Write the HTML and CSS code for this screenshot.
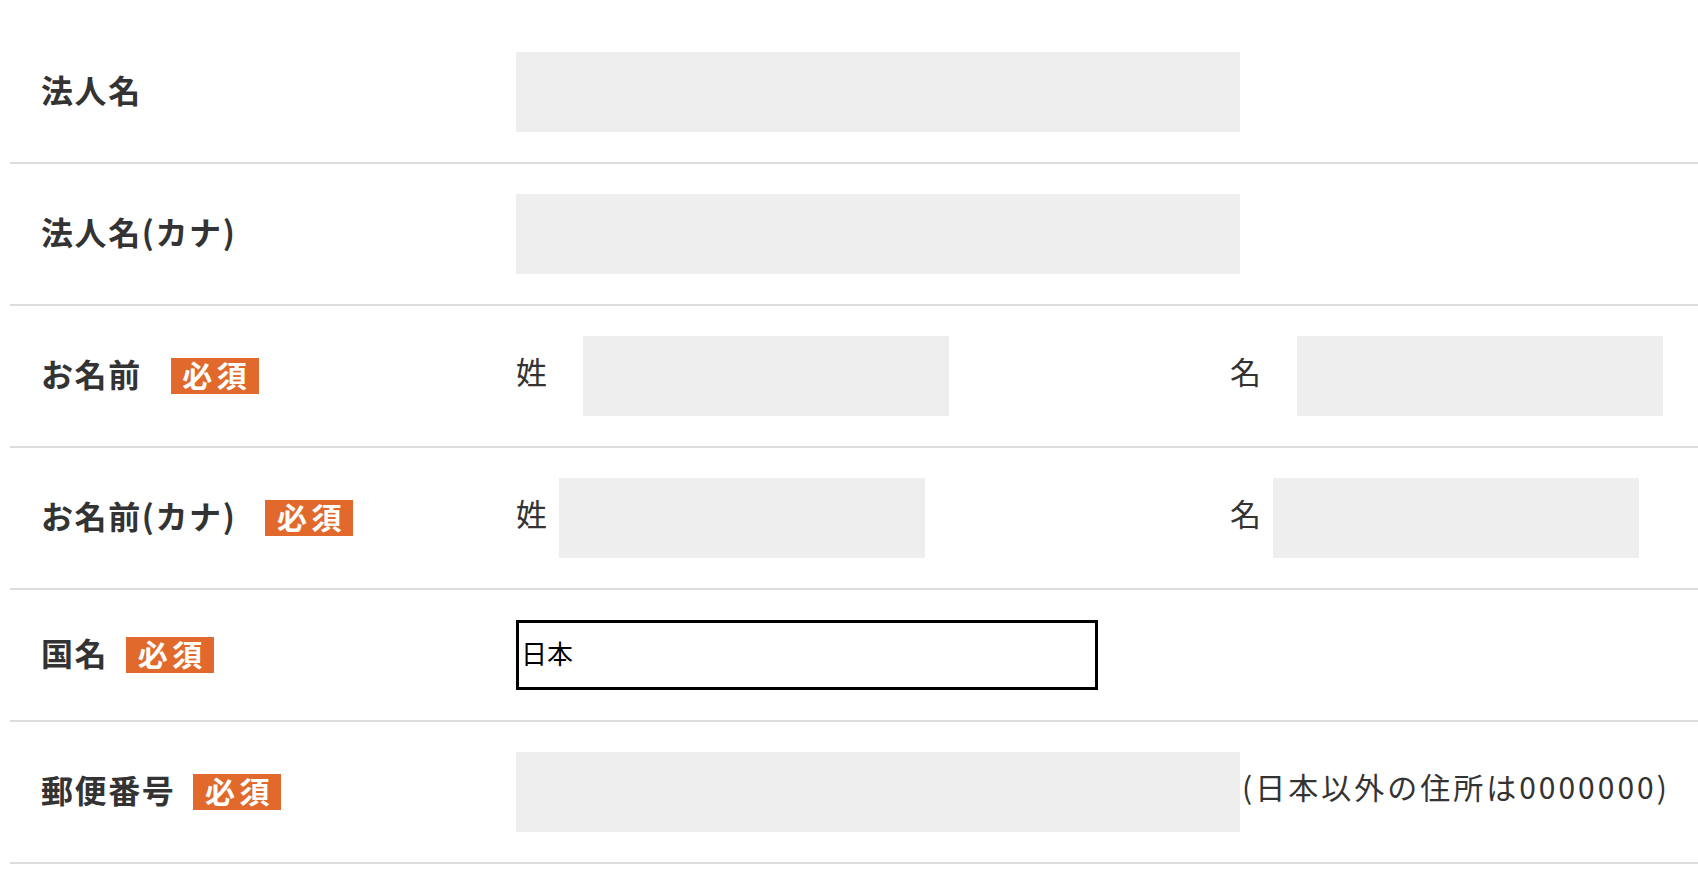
FILE: index.html
```html
<!DOCTYPE html>
<html lang="ja">
<head>
<meta charset="utf-8">
<title>フォーム</title>
<link rel="stylesheet" href="styles.css">
</head>
<body>
<div class="form">
  <div class="row">
    <div class="label"><span class="label-text">法人名</span></div>
    <div class="value"><input class="field field-wide" type="text"></div>
  </div>
  <div class="row">
    <div class="label"><span class="label-text">法人名(カナ)</span></div>
    <div class="value"><input class="field field-wide" type="text"></div>
  </div>
  <div class="row">
    <div class="label"><span class="label-text">お名前</span><span class="badge badge-far">必須</span></div>
    <div class="value">
      <div class="half"><span class="sub-label sub-wide">姓</span><input class="field field-half" type="text"></div>
      <div class="half half-last"><span class="sub-label sub-wide">名</span><input class="field field-half" type="text"></div>
    </div>
  </div>
  <div class="row">
    <div class="label"><span class="label-text">お名前(カナ)</span><span class="badge badge-far">必須</span></div>
    <div class="value">
      <div class="half"><span class="sub-label sub-narrow">姓</span><input class="field field-half" type="text"></div>
      <div class="half half-last"><span class="sub-label sub-narrow">名</span><input class="field field-half" type="text"></div>
    </div>
  </div>
  <div class="row">
    <div class="label"><span class="label-text">国名</span><span class="badge">必須</span></div>
    <div class="value">
      <select class="country"><option>日本</option></select>
    </div>
  </div>
  <div class="row">
    <div class="label"><span class="label-text">郵便番号</span><span class="badge">必須</span></div>
    <div class="value"><input class="field field-wide" type="text"><span class="note">(日本以外の住所は0000000)</span></div>
  </div>
</div>
</body>
</html>
```
FILE: styles.css
```css
html, body {
  margin: 0;
  padding: 0;
  background: #fff;
  overflow: hidden;
}
body {
  font-family: "Noto Sans CJK JP", "Noto Sans", sans-serif;
  color: #333;
}
.form {
  padding: 22px 0 0 10px;
}
.row {
  display: flex;
  align-items: center;
  padding: 30px 0;
  border-bottom: 2px solid #dddddd;
}
.label {
  width: 506px;
  flex: none;
  display: flex;
  align-items: center;
  padding-left: 31px;
  box-sizing: border-box;
}
.label-text {
  font-size: 32px;
  font-weight: 700;
  letter-spacing: 0.05em;
  line-height: 1;
  padding-bottom: 6px;
}
.badge {
  display: inline-flex;
  align-items: center;
  justify-content: center;
  margin-left: 18px;
  width: 88px;
  height: 36px;
  background: #e0692b;
  color: #fff;
  font-size: 30px;
  font-weight: 700;
  letter-spacing: 0.15em;
  padding: 0 0 4px 4px;
  box-sizing: border-box;
  line-height: 1;
}
.badge-far {
  margin-left: 29px;
}
.value {
  flex: 1;
  min-width: 0;
  display: flex;
  align-items: center;
}
.field {
  display: block;
  flex: none;
  height: 80px;
  border: none;
  background: #eeeeee;
  margin: 0;
  padding: 0;
  outline: none;
}
.field-wide {
  width: 724px;
}
.field-half {
  width: 366px;
}
.half {
  width: 714px;
  flex: none;
  display: flex;
  align-items: center;
}
.half-last {
  width: auto;
}
.sub-label {
  font-size: 31px;
  line-height: 1;
  flex: none;
  padding-bottom: 12px;
}
.sub-wide {
  width: 67px;
}
.sub-narrow {
  width: 43px;
}
.country {
  appearance: none;
  -webkit-appearance: none;
  width: 582px;
  height: 70px;
  border: 3px solid #000;
  border-radius: 0;
  background: #fff;
  color: #000;
  font-family: "Noto Sans CJK JP", sans-serif;
  font-size: 26px;
  padding: 0 2px 6px;
  margin: 0;
  outline: none;
}
.note {
  font-size: 30px;
  letter-spacing: 0.1em;
  line-height: 1;
  margin-left: 2px;
  padding-bottom: 12px;
  white-space: nowrap;
}
```
